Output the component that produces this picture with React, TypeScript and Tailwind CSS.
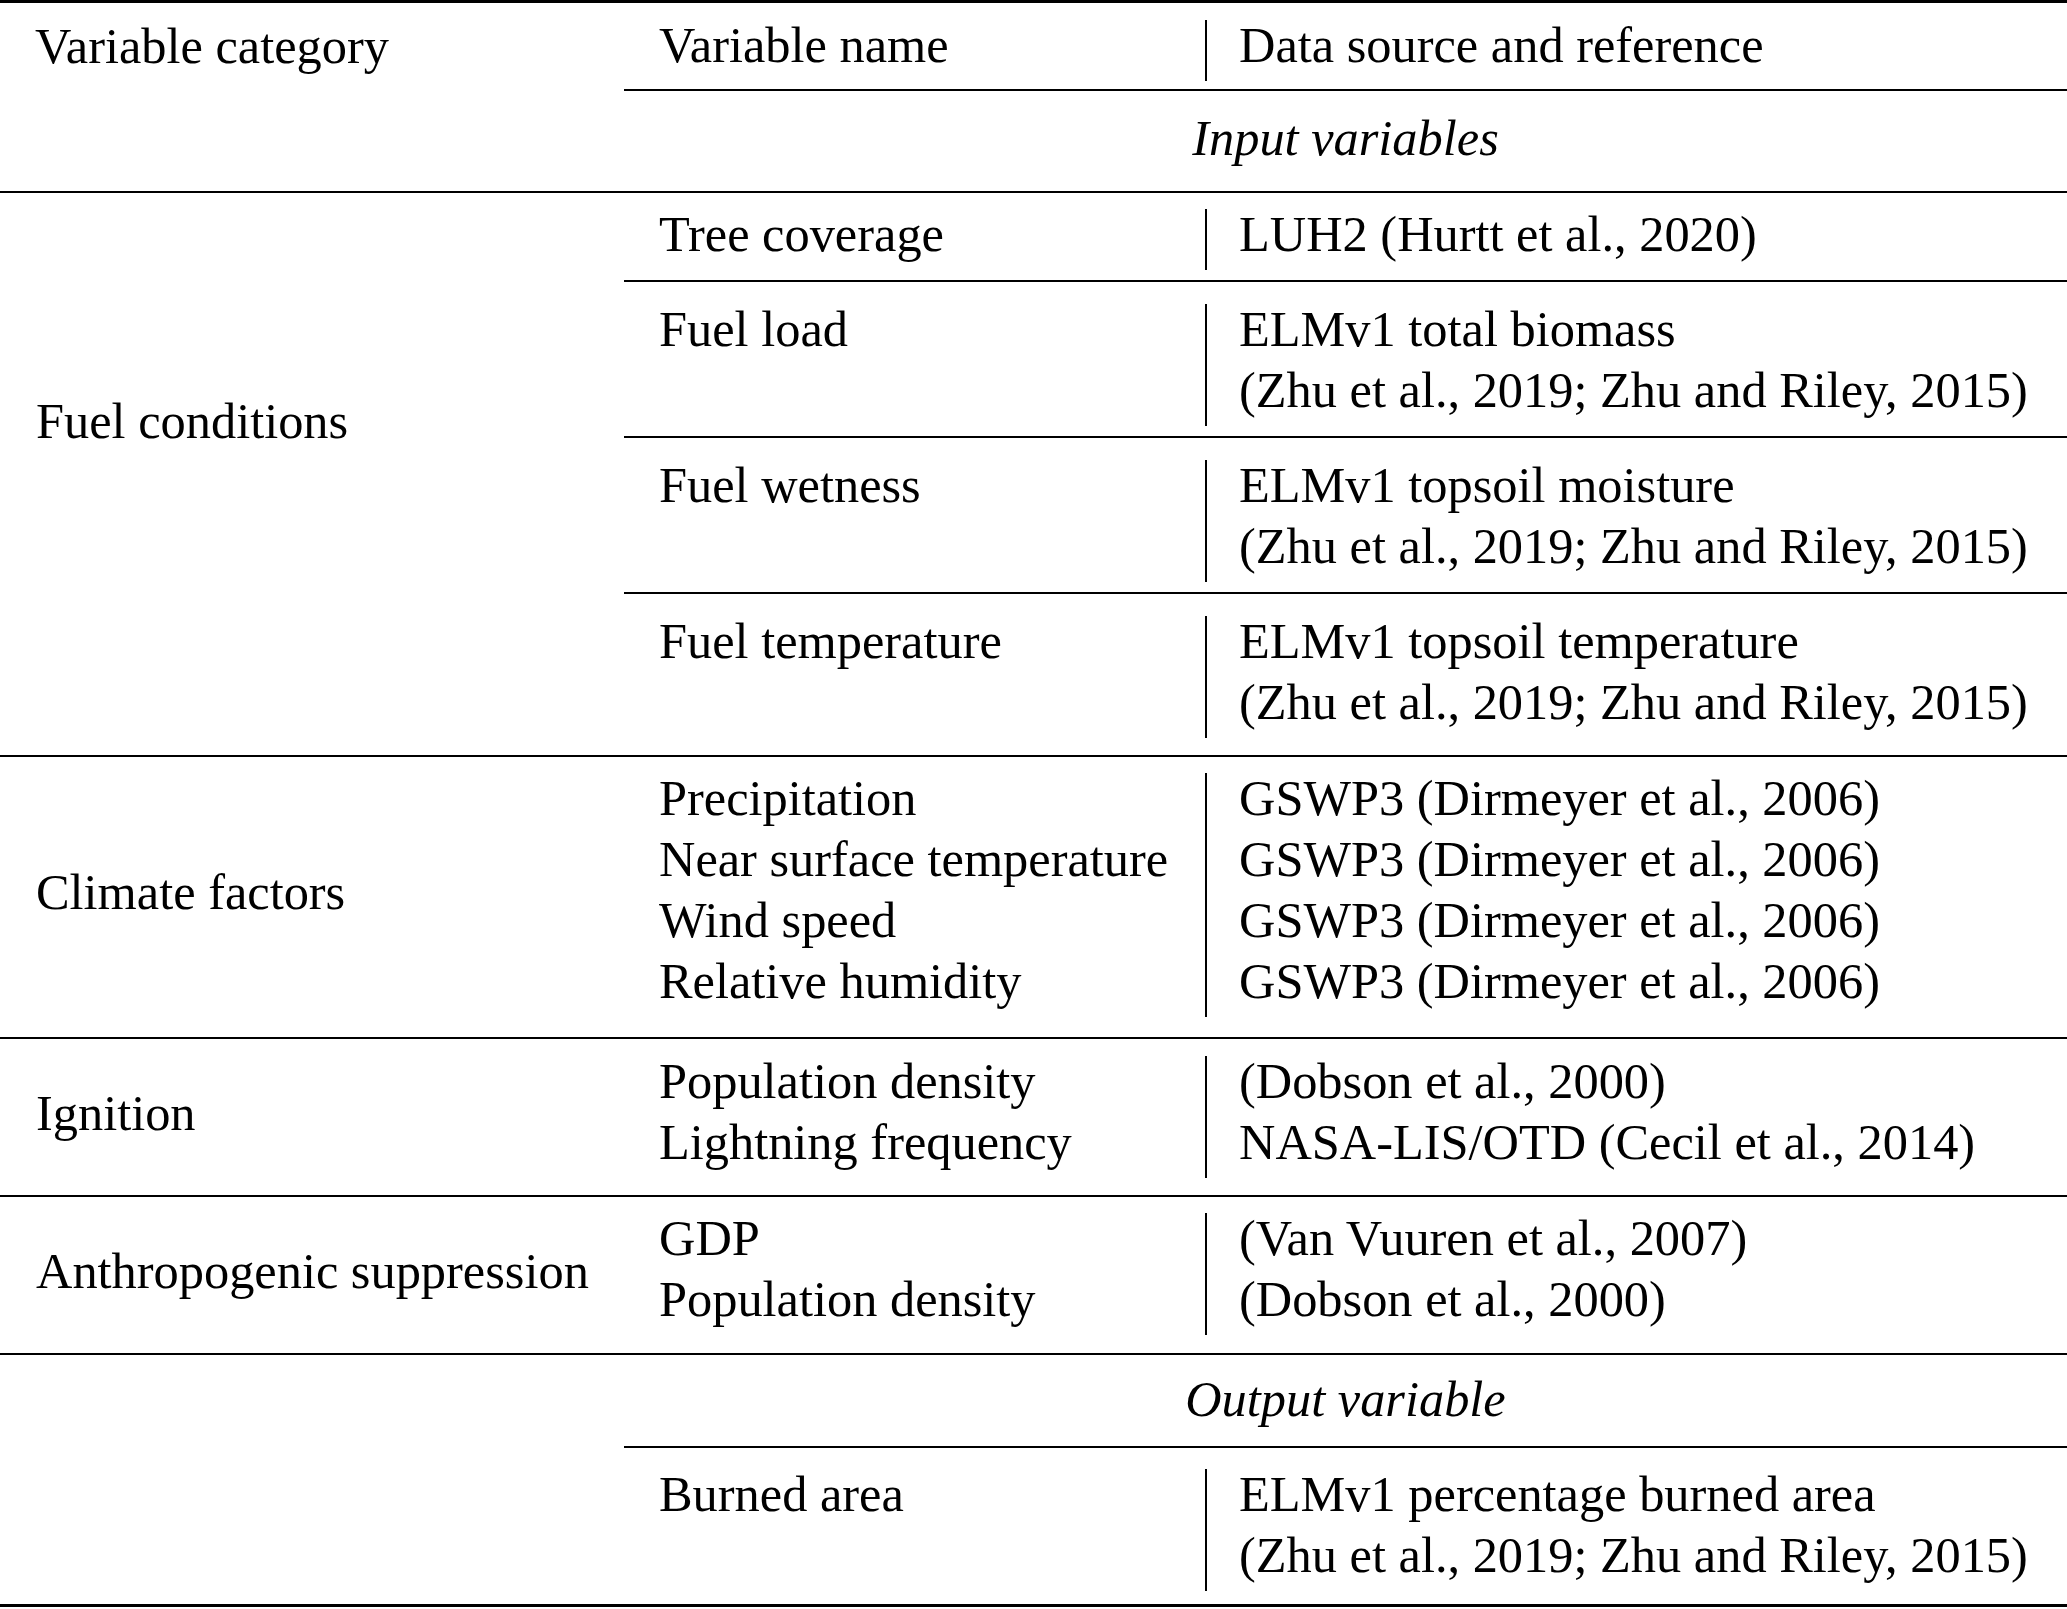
import React from 'react';
import { twMerge as cn } from 'tailwind-merge';

type Row = {
  names: string[];
  sources: string[];
  pad: string;
};

type Block = {
  label: string;
  labelPad: string;
  rows: Row[];
};

// content height of a row, one entry per line count (line height 61px)
const rowHeight: Record<number, string> = {
  1: 'h-[61px]',
  2: 'h-[122px]',
  4: 'h-[244px]',
};

const zhu = '(Zhu et al., 2019; Zhu and Riley, 2015)';
const gswp = 'GSWP3 (Dirmeyer et al., 2006)';

const blocks: Block[] = [
  {
    label: 'Fuel conditions',
    labelPad: 'pt-[198px]',
    rows: [
      { names: ['Tree coverage'], sources: ['LUH2 (Hurtt et al., 2020)'], pad: 'pt-[16px] pb-[10px]' },
      { names: ['Fuel load'], sources: ['ELMv1 total biomass', zhu], pad: 'pt-[22px] pb-[10px]' },
      { names: ['Fuel wetness'], sources: ['ELMv1 topsoil moisture', zhu], pad: 'pt-[22px] pb-[10px]' },
      { names: ['Fuel temperature'], sources: ['ELMv1 topsoil temperature', zhu], pad: 'pt-[22px] pb-[17px]' },
    ],
  },
  {
    label: 'Climate factors',
    labelPad: 'pt-[105px]',
    rows: [
      {
        names: ['Precipitation', 'Near surface temperature', 'Wind speed', 'Relative humidity'],
        sources: [gswp, gswp, gswp, gswp],
        pad: 'pt-[16px] pb-[20px]',
      },
    ],
  },
  {
    label: 'Ignition',
    labelPad: 'pt-[44px]',
    rows: [
      {
        names: ['Population density', 'Lightning frequency'],
        sources: ['(Dobson et al., 2000)', 'NASA-LIS/OTD (Cecil et al., 2014)'],
        pad: 'pt-[17px] pb-[17px]',
      },
    ],
  },
  {
    label: 'Anthropogenic suppression',
    labelPad: 'pt-[44px]',
    rows: [
      {
        names: ['GDP', 'Population density'],
        sources: ['(Van Vuuren et al., 2007)', '(Dobson et al., 2000)'],
        pad: 'pt-[16px] pb-[18px]',
      },
    ],
  },
];

const Rule = ({ className }: { className?: string }) => (
  <div className={cn('h-[2px] bg-black', className)} />
);

const TableRow = ({ row }: { row: Row }) => {
  const lines = Math.max(row.names.length, row.sources.length);
  return (
    <div className={row.pad}>
      <div className={cn('flex', rowHeight[lines])}>
        <div className="w-[581px] shrink-0 pl-[35px]">
          <div className="-mt-[5px]">
            {row.names.map((n, i) => (
              <div key={i} className="whitespace-nowrap">{n}</div>
            ))}
          </div>
        </div>
        <div className="flex-1 border-l-2 border-black pl-[32px]">
          <div className="-mt-[5px]">
            {row.sources.map((s, i) => (
              <div key={i} className="whitespace-nowrap">{s}</div>
            ))}
          </div>
        </div>
      </div>
    </div>
  );
};

export default function App() {
  return (
    <div className="min-h-screen bg-white text-black">
      <div className="w-[2067px] font-['Liberation_Serif','Times_New_Roman',serif] text-[50.4px] leading-[61px]">
        <Rule className="h-[3px]" />

        {/* header */}
        <div className="flex">
          <div className="w-[624px] shrink-0 pl-[35px] pt-[13px] whitespace-nowrap">Variable category</div>
          <div className="flex-1">
            <TableRow row={{ names: ['Variable name'], sources: ['Data source and reference'], pad: 'pt-[17px] pb-[8px]' }} />
            <Rule />
            <div className="pt-[17px] pb-[22px]">
              <div className="h-[61px] text-center italic">Input variables</div>
            </div>
          </div>
        </div>
        <Rule />

        {blocks.map((block) => (
          <React.Fragment key={block.label}>
            <div className="flex">
              <div className={cn('w-[624px] shrink-0 pl-[36px] whitespace-nowrap', block.labelPad)}>
                {block.label}
              </div>
              <div className="flex-1">
                {block.rows.map((row, i) => (
                  <React.Fragment key={i}>
                    {i > 0 && <Rule />}
                    <TableRow row={row} />
                  </React.Fragment>
                ))}
              </div>
            </div>
            <Rule />
          </React.Fragment>
        ))}

        {/* output */}
        <div className="flex">
          <div className="w-[624px] shrink-0" />
          <div className="flex-1">
            <div className="pt-[14px] pb-[16px]">
              <div className="h-[61px] text-center italic">Output variable</div>
            </div>
            <Rule />
            <TableRow
              row={{ names: ['Burned area'], sources: ['ELMv1 percentage burned area', zhu], pad: 'pt-[21px] pb-[13px]' }}
            />
          </div>
        </div>
        <Rule className="h-[3px]" />
      </div>
    </div>
  );
}
